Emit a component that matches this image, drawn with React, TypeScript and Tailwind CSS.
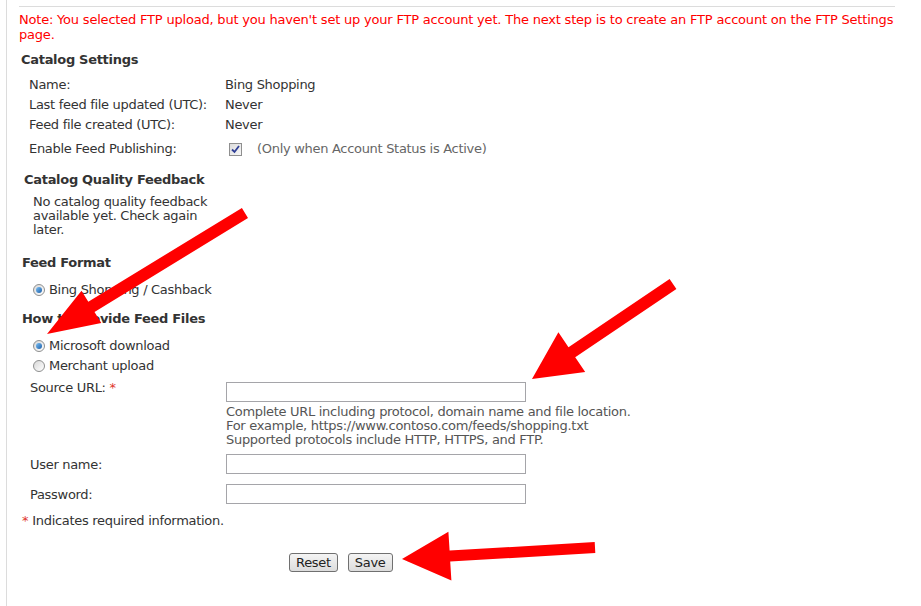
import React from "react";

const Radio = ({ checked }: { checked?: boolean }) => (
  <span className="w-[12px] h-[12px] rounded-full border border-[#8e8f8f] bg-gradient-to-br from-[#d8d8d8] to-[#ffffff] flex items-center justify-center shrink-0">
    {checked && (
      <span className="w-[6px] h-[6px] rounded-full bg-gradient-to-br from-[#7cc0f4] to-[#1b5fa8]" />
    )}
  </span>
);

const CheckBox = () => (
  <span className="w-[13px] h-[13px] border border-[#8f8f8f] bg-gradient-to-br from-[#dcdcdc] to-[#f7f7f7] flex items-center justify-center">
    <svg width="9" height="9" viewBox="0 0 9 9">
      <path d="M1 4.5 L3.5 7 L8 1" fill="none" stroke="#2f3f96" strokeWidth="1.8" />
    </svg>
  </span>
);

const TextBox = () => (
  <input
    type="text"
    className="w-[300px] h-[20px] border border-[#a5a5a9] bg-white outline-none px-1"
  />
);

const Btn = ({ label }: { label: string }) => (
  <button className="h-[19px] px-[6px] rounded-[3px] border border-[#707070] bg-gradient-to-b from-[#f4f4f4] to-[#dcdcdc] text-[13px] leading-none text-[#222]">
    {label}
  </button>
);

const Arrows = () => (
  <svg
    className="absolute left-0 top-0 pointer-events-none"
    width="921"
    height="606"
    viewBox="0 0 921 606"
  >
    <polygon
      fill="#ff0000"
      points="248,218 94.5,312 101.3,323 47,334 81.5,290.7 88.3,301.8 241.9,207.9"
    />
    <polygon
      fill="#ff0000"
      points="676.4,289 575.2,357.2 585.2,372.1 532,379 558.4,332.3 568.5,347.2 669.6,279"
    />
    <polygon
      fill="#ff0000"
      points="595.3,553 450.2,561.6 451.4,580.6 402,559 448.4,531.7 449.6,550.6 594.7,542"
    />
  </svg>
);

export default function App() {
  return (
    <div className="relative w-[921px] h-[606px] overflow-hidden bg-white font-['DejaVu_Sans',sans-serif] text-[13px] tracking-[-0.3px] text-[#333]">
      <div className="flex h-full pl-[6px]">
        <div className="h-full border-l border-[#dcdcdc] pl-[12px]">
          <div className="mt-[6px] w-[876px] border-t border-[#dcdcdc]" />

          {/* note */}
          <p className="mt-[5px] w-[880px] leading-[15px] tracking-[-0.2px] text-[#ff0000]">
            Note: You selected FTP upload, but you haven't set up your FTP account yet. The next
            step is to create an FTP account on the FTP Settings page.
          </p>

          {/* catalog settings */}
          <h3 className="mt-[8px] ml-[2px] h-[20px] flex items-center font-bold">
            Catalog Settings
          </h3>
          <div className="mt-[5px] pl-[10px] grid grid-cols-[196px_1fr]">
            <div className="h-[20px] flex items-center">Name:</div>
            <div className="h-[20px] flex items-center">Bing Shopping</div>
            <div className="h-[20px] flex items-center">Last feed file updated (UTC):</div>
            <div className="h-[20px] flex items-center">Never</div>
            <div className="h-[20px] flex items-center">Feed file created (UTC):</div>
            <div className="h-[20px] flex items-center">Never</div>
            <div className="h-[28px] flex items-center">Enable Feed Publishing:</div>
            <div className="h-[28px] flex items-center gap-[15px] pl-[4px]">
              <CheckBox />
              <span className="text-[#666]">(Only when Account Status is Active)</span>
            </div>
          </div>

          {/* quality feedback */}
          <h3 className="mt-[7px] ml-[5px] h-[20px] flex items-center font-bold">
            Catalog Quality Feedback
          </h3>
          <p className="mt-[5px] ml-[14px] leading-[14px]">
            No catalog quality feedback
            <br />
            available yet. Check again
            <br />
            later.
          </p>

          {/* feed format */}
          <h3 className="mt-[16px] ml-[3px] h-[20px] flex items-center font-bold">Feed Format</h3>
          <label className="mt-[7px] ml-[14px] h-[20px] flex items-center gap-[4px]">
            <Radio checked />
            <span>Bing Shopping / Cashback</span>
          </label>

          <h3 className="mt-[9px] ml-[3px] h-[20px] flex items-center font-bold">
            How to Provide Feed Files
          </h3>
          <label className="mt-[7px] ml-[14px] h-[20px] flex items-center gap-[4px]">
            <Radio checked />
            <span>Microsoft download</span>
          </label>
          <label className="ml-[14px] h-[20px] flex items-center gap-[4px]">
            <Radio />
            <span>Merchant upload</span>
          </label>

          {/* source */}
          <div className="mt-[5px] pl-[11px] grid grid-cols-[196px_1fr]">
            <div className="leading-[14px]">
              Source URL: <span className="text-[#e0362c]">*</span>
            </div>
            <div className="pt-[1px]">
              <TextBox />
              <p className="mt-[3px] leading-[14px] text-[#555]">
                Complete URL including protocol, domain name and file location.
                <br />
                For example, https://www.contoso.com/feeds/shopping.txt
                <br />
                Supported protocols include HTTP, HTTPS, and FTP.
              </p>
            </div>

            <div className="mt-[7px] h-[20px] pt-[2px] flex items-center">User name:</div>
            <div className="mt-[7px]">
              <TextBox />
            </div>
            <div className="mt-[10px] h-[20px] pt-[2px] flex items-center">Password:</div>
            <div className="mt-[10px]">
              <TextBox />
            </div>
          </div>

          <p className="mt-[7px] ml-[3px] h-[20px] flex items-center">
            <span className="text-[#e0362c] mr-[4px]">*</span>Indicates required information.
          </p>

          <div className="mt-[22px] ml-[270px] flex gap-[10px]">
            <Btn label="Reset" />
            <Btn label="Save" />
          </div>
        </div>
      </div>
      <Arrows />
    </div>
  );
}
